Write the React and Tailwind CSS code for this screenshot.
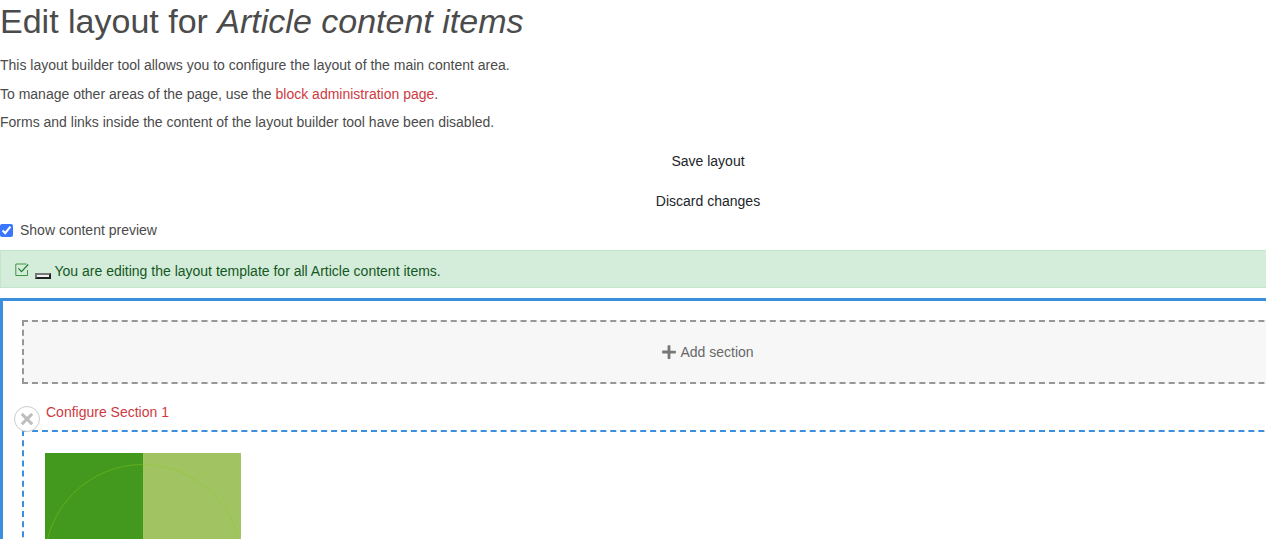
const PLUS =
  'M0.656,9.023c0,0.274,0.224,0.5,0.499,0.5l4.853,0.001c0.274-0.001,0.501,0.226,0.5,0.5l0.001,4.853c-0.001,0.273,0.227,0.5,0.501,0.5l1.995-0.009c0.273-0.003,0.497-0.229,0.5-0.503l0.002-4.806c0-0.272,0.228-0.5,0.499-0.502l4.831-0.021c0.271-0.005,0.497-0.23,0.501-0.502l0.008-1.998c0-0.276-0.225-0.5-0.499-0.5l-4.852,0c-0.275,0-0.502-0.228-0.501-0.5L9.493,1.184c0-0.275-0.225-0.499-0.5-0.499L6.997,0.693C6.722,0.694,6.496,0.92,6.495,1.195L6.476,6.026c-0.001,0.274-0.227,0.5-0.501,0.5L1.167,6.525C0.892,6.526,0.665,6.752,0.665,7.027L0.656,9.023z';
const CROSS =
  'M3.51 13.925c.194.194.512.195.706.001l3.432-3.431c.194-.194.514-.194.708 0l3.432 3.431c.192.194.514.193.707-.001l1.405-1.417c.191-.195.189-.514-.002-.709l-3.397-3.4c-.192-.193-.192-.514-.002-.708l3.401-3.43c.189-.195.189-.515 0-.709l-1.407-1.418c-.195-.195-.513-.195-.707-.001l-3.43 3.431c-.195.194-.516.194-.708 0l-3.432-3.431c-.195-.195-.512-.194-.706.001l-1.407 1.417c-.194.195-.194.515 0 .71l3.403 3.429c.193.195.193.514-.001.708l-3.4 3.399c-.194.195-.195.516-.001.709l1.406 1.419z';

function Intro() {
  return (
    <header>
      <h1 className="h-[42px] text-[34px] leading-[42px]">
        Edit layout for <em>Article content items</em>
      </h1>
      <div className="mt-3 flex flex-col">
        <p className="mt-[0.5px]">This layout builder tool allows you to configure the layout of the main content area.</p>
        <p className="mt-2">
          To manage other areas of the page, use the{' '}
          <a className="text-[#ce3a3f]">block administration page</a>.
        </p>
        <p className="mt-[7px]">Forms and links inside the content of the layout builder tool have been disabled.</p>
      </div>
    </header>
  );
}

function Actions() {
  return (
    <div className="mt-[9px] flex flex-col text-[#212529]">
      <button className="h-10">Save layout</button>
      <button className="h-10">Discard changes</button>
    </div>
  );
}

function Message() {
  return (
    <div className="mt-[9.5px] flex h-[38px] items-center border border-[#c3e6cb] bg-[#d4edda] pl-3.5 text-[#155724]">
      <svg className="mt-px size-[14px] overflow-visible" viewBox="0 0 14 14" fill="none" stroke="#3f9443">
        <path d="M11.5 1H0.8V12.5H12.5V7" />
        <path d="M3.4 5.4L6.5 8.7L13.2 1.5" stroke="#237a2b" strokeWidth="1.2" />
      </svg>
      <span className="ml-[6px] mt-[14px] h-[6px] w-4 border-2 border-b-[#212121] border-l-[#767676] border-r-[#212121] border-t-[#767676] bg-[#efefef]" />
      <span className="ml-[3.5px] mt-[5px]">You are editing the layout template for all Article content items.</span>
    </div>
  );
}

function Section() {
  return (
    <section className="relative mt-[18px]">
      <button className="absolute -left-2 top-1 z-10 flex size-[26px] items-center justify-center rounded-full border border-[#ccc] bg-white">
        <svg className="size-4" viewBox="0 0 16 16" fill="#bebebe">
          <path d={CROSS} />
        </svg>
      </button>
      <a className="block h-7 pl-6 text-[#ce3a3f]">Configure Section 1</a>
      <div className="h-[320px] border-2 border-dashed border-[#3b8fdc] p-[21px]">
        <svg className="h-[196px] w-[196px]" viewBox="0 0 196 196" fill="none">
          <path d="M0 0H98V196H0z" fill="#43991d" />
          <path d="M98 0H196V196H98z" fill="#a2c362" />
          <path d="M-0.5 110A98.5 98.5 0 0 1 98 11.5" stroke="#62ad20" />
          <path d="M98 11.5A98.5 98.5 0 0 1 196.5 110" stroke="#96c748" />
        </svg>
      </div>
    </section>
  );
}

export default function App() {
  return (
    <div className="h-[539px] w-full overflow-hidden bg-white font-['Liberation_Sans',sans-serif] text-[14px] leading-[21px] text-[#4b4b4b]">
      <main className="w-[1416px]">
        <Intro />
        <Actions />
        <label className="mt-[-2px] flex h-[21px] items-center">
          <input type="checkbox" defaultChecked className="mr-[7px] mt-px size-[13px] accent-[#3b76ff]" />
          Show content preview
        </label>
        <Message />
        <div className="mt-2.5 border-[3px] border-[#3b8fdc] p-[19px]">
          <button className="flex h-16 w-full items-center justify-center gap-[4px] border-2 border-dashed border-[#979797] bg-[#f7f7f7] text-[#686868]">
            <svg className="size-[14px]" viewBox="0.5 0.5 15 15" fill="#787878">
              <path d={PLUS} />
            </svg>
            Add section
          </button>
          <Section />
        </div>
      </main>
    </div>
  );
}
